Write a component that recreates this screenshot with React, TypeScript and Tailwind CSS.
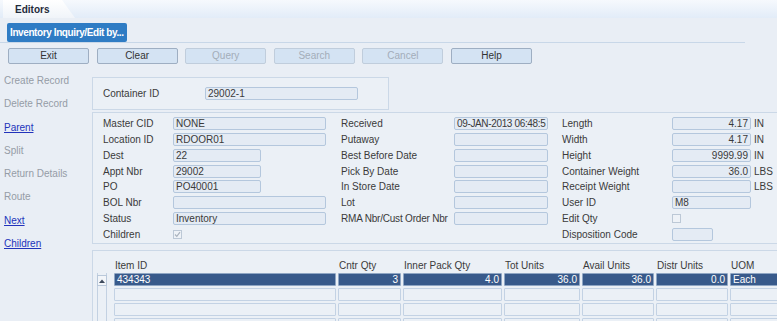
import React from 'react';

const inputCls =
  'h-[13px] border border-[#b4c7dd] rounded-[2px] bg-[#e4ebf4] px-[2px] leading-[11px] text-[10px] text-[#3a3a3a] overflow-hidden whitespace-nowrap';

function Field({ value = '', w, right = false, tight = false }: { value?: string; w: string; right?: boolean; tight?: boolean }) {
  return (
    <div className={`${inputCls} ${w} ${right ? 'text-right' : ''} ${tight ? 'tracking-[-0.35px]' : ''}`}>
      {value}
    </div>
  );
}

function Check({ checked = false }: { checked?: boolean }) {
  return (
    <div className="w-[9px] h-[9px] border border-[#bcc8d6] bg-[#eef2f7] flex items-center justify-center">
      {checked && (
        <svg width="7" height="7" viewBox="0 0 7 7">
          <path d="M1 3.5 L2.8 5.3 L6 1.2" stroke="#a9b2bd" strokeWidth="1.2" fill="none" />
        </svg>
      )}
    </div>
  );
}

function Row({ children }: { children: React.ReactNode }) {
  return <div className="h-[15.75px] flex items-center">{children}</div>;
}

const buttons = [
  { label: 'Exit', enabled: true },
  { label: 'Clear', enabled: true },
  { label: 'Query', enabled: false },
  { label: 'Search', enabled: false },
  { label: 'Cancel', enabled: false },
  { label: 'Help', enabled: true },
];

const sideLinks = [
  { label: 'Create Record', link: false },
  { label: 'Delete Record', link: false },
  { label: 'Parent', link: true },
  { label: 'Split', link: false },
  { label: 'Return Details', link: false },
  { label: 'Route', link: false },
  { label: 'Next', link: true },
  { label: 'Children', link: true },
];

const cols = [
  { label: 'Item ID', w: 'w-[222px]', value: '434343', right: false },
  { label: 'Cntr Qty', w: 'w-[63px]', value: '3', right: true },
  { label: 'Inner Pack Qty', w: 'w-[99px]', value: '4.0', right: true },
  { label: 'Tot Units', w: 'w-[76px]', value: '36.0', right: true },
  { label: 'Avail Units', w: 'w-[72px]', value: '36.0', right: true },
  { label: 'Distr Units', w: 'w-[72px]', value: '0.0', right: true },
  { label: 'UOM', w: 'w-[72px]', value: 'Each', right: false },
];

export default function App() {
  return (
    <div className="w-[777px] h-[321px] overflow-hidden bg-[#e9eef5] text-[10px] text-[#3a3a3a] font-['Liberation_Sans',Arial,sans-serif]">
      {/* TAB BAR */}
      <div className="h-[18px] bg-linear-to-b from-[#f6f9fd] to-[#e2ecf8] flex items-end">
        <div className="ml-[3px] h-[18px] w-[72px] bg-linear-to-b from-[#ffffff] to-[#f0f4f9] [clip-path:polygon(0_0,82%_0,100%_100%,0_100%)] flex items-center">
          <span className="pl-[12px] font-bold text-[#1f2b3b]">Editors</span>
        </div>
      </div>

      {/* TITLE BUTTON */}
      <div className="pt-[5px] pl-[7px]">
        <div className="w-[120px] h-[19px] rounded-[2px] bg-[#2f7cc4] text-white font-bold leading-[19px] pl-[3px] whitespace-nowrap tracking-[-0.4px]">
          Inventory Inquiry/Edit by...
        </div>
      </div>
      <div className="h-[1px] w-[745px] bg-[#c8d7e8]" />

      {/* TOOLBAR */}
      <div className="mt-[5px] pl-[8px] flex gap-[7.6px]">
        {buttons.map((b) => (
          <div
            key={b.label}
            className={`w-[81px] h-[16px] rounded-[2px] border bg-[#d4e3f3] text-center leading-[14px] ${
              b.enabled ? 'border-[#9eaec2] text-[#333]' : 'border-[#c0cddc] text-[#a3adb9]'
            }`}
          >
            {b.label}
          </div>
        ))}
      </div>

      {/* BODY */}
      <div className="flex">
        <div className="w-[92px] shrink-0 pt-[5px] pl-[4px] flex flex-col">
          {sideLinks.map((l) => (
            <div
              key={l.label}
              className={`h-[23.3px] leading-[23.3px] whitespace-nowrap ${
                l.link ? 'text-[#2233bb] underline' : 'text-[#959ca6]'
              }`}
            >
              {l.label}
            </div>
          ))}
        </div>

        <div className="flex-1 flex flex-col">
          {/* CONTAINER ID */}
          <div className="mt-[13px] w-[297px] h-[33px] border border-[#cbd8e7] bg-[#ebf0f6] flex items-center pl-[10px]">
            <span className="w-[102px]">Container ID</span>
            <Field value="29002-1" w="w-[153px]" />
          </div>

          {/* DETAILS */}
          <div className="mt-[2px] h-[132px] border border-r-0 border-[#cbd8e7] bg-[#ebf0f6] pt-[3px] pl-[10px] flex">
            <div className="w-[238px] flex flex-col">
              <Row><span className="w-[70px]">Master CID</span><Field value="NONE" w="w-[153px]" /></Row>
              <Row><span className="w-[70px]">Location ID</span><Field value="RDOOR01" w="w-[153px]" /></Row>
              <Row><span className="w-[70px]">Dest</span><Field value="22" w="w-[88px]" /></Row>
              <Row><span className="w-[70px]">Appt Nbr</span><Field value="29002" w="w-[88px]" /></Row>
              <Row><span className="w-[70px]">PO</span><Field value="PO40001" w="w-[88px]" /></Row>
              <Row><span className="w-[70px]">BOL Nbr</span><Field w="w-[153px]" /></Row>
              <Row><span className="w-[70px]">Status</span><Field value="Inventory" w="w-[153px]" /></Row>
              <Row><span className="w-[70px]">Children</span><Check checked /></Row>
            </div>
            <div className="w-[221px] flex flex-col">
              <Row><span className="w-[113px]">Received</span><Field value="09-JAN-2013 06:48:5" w="w-[94px]" tight /></Row>
              <Row><span className="w-[113px]">Putaway</span><Field w="w-[94px]" /></Row>
              <Row><span className="w-[113px]">Best Before Date</span><Field w="w-[94px]" /></Row>
              <Row><span className="w-[113px]">Pick By Date</span><Field w="w-[94px]" /></Row>
              <Row><span className="w-[113px]">In Store Date</span><Field w="w-[94px]" /></Row>
              <Row><span className="w-[113px]">Lot</span><Field w="w-[94px]" /></Row>
              <Row><span className="w-[113px] whitespace-nowrap tracking-[-0.2px]">RMA Nbr/Cust Order Nbr</span><Field w="w-[94px]" /></Row>
            </div>
            <div className="flex flex-col">
              <Row><span className="w-[110px]">Length</span><Field value="4.17" w="w-[79px]" right /><span className="ml-[3px]">IN</span></Row>
              <Row><span className="w-[110px]">Width</span><Field value="4.17" w="w-[79px]" right /><span className="ml-[3px]">IN</span></Row>
              <Row><span className="w-[110px]">Height</span><Field value="9999.99" w="w-[79px]" right /><span className="ml-[3px]">IN</span></Row>
              <Row><span className="w-[110px]">Container Weight</span><Field value="36.0" w="w-[79px]" right /><span className="ml-[3px]">LBS</span></Row>
              <Row><span className="w-[110px]">Receipt Weight</span><Field w="w-[79px]" right /><span className="ml-[3px]">LBS</span></Row>
              <Row><span className="w-[110px]">User ID</span><Field value="M8" w="w-[79px]" /></Row>
              <Row><span className="w-[110px]">Edit Qty</span><Check /></Row>
              <Row><span className="w-[110px]">Disposition Code</span><Field w="w-[41px]" /></Row>
            </div>
          </div>

          {/* ITEMS TABLE */}
          <div className="mt-[6px] h-[80px] border-l border-t border-[#cbd8e7] bg-[#ebf0f6] pt-[8px] pl-[4px] flex flex-col">
            <div className="flex h-[14px] leading-[14px]">
              <div className="w-[17px] shrink-0" />
              <div className="flex gap-[2px]">
                {cols.map((c) => (
                  <div key={c.label} className={`${c.w} shrink-0 pl-[1px] whitespace-nowrap`}>
                    {c.label}
                  </div>
                ))}
              </div>
            </div>
            <div className="flex">
              <div className="w-[10px] shrink-0 h-[60px] border-x border-[#c3d1e2] flex flex-col items-center">
                <div className="mt-[2px] w-[10px] h-[11px] border border-[#b9c8da] bg-[#f2f5f9] flex items-center justify-center">
                  <svg width="6" height="4" viewBox="0 0 6 4">
                    <path d="M0 4 L3 0.5 L6 4 Z" fill="#3d4a5c" />
                  </svg>
                </div>
              </div>
              <div className="ml-[7px] flex flex-col gap-[2px]">
                {[0, 1, 2, 3].map((r) => (
                  <div key={r} className="flex gap-[2px]">
                    {cols.map((c) => (
                      <div
                        key={c.label}
                        className={`${c.w} shrink-0 h-[13px] leading-[11px] px-[2px] border rounded-[1px] ${
                          c.right ? 'text-right' : ''
                        } ${
                          r === 0
                            ? 'bg-[#385a8b] border-[#8fa6c4] text-white'
                            : 'bg-[#ebf0f6] border-[#c3d2e4]'
                        }`}
                      >
                        {r === 0 ? c.value : ''}
                      </div>
                    ))}
                  </div>
                ))}
              </div>
            </div>
          </div>
        </div>
      </div>
    </div>
  );
}
